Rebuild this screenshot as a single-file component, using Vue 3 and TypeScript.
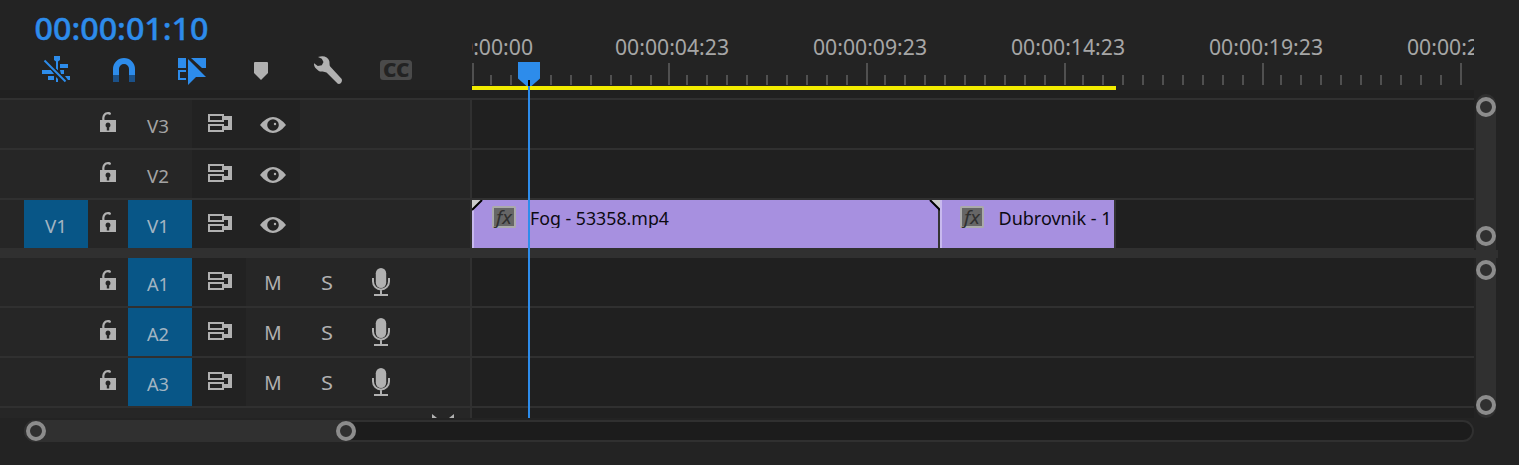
<script setup lang="ts">
interface Track {
  name: string
  source?: string
  target: boolean
}

interface Clip {
  name: string
  width: number
  bodyWidth: number
  textWidth: number
  textX: number
  fade: 'start-end' | 'none'
}

const videoTracks: Track[] = [
  { name: 'V3', target: false },
  { name: 'V2', target: false },
  { name: 'V1', source: 'V1', target: true },
]
const audioTracks: Track[] = [
  { name: 'A1', target: true },
  { name: 'A2', target: true },
  { name: 'A3', target: true },
]
const clips: Clip[] = [
  { name: 'Fog - 53358.mp4', width: 468, bodyWidth: 466, textWidth: 139, textX: 58, fade: 'start-end' },
  { name: 'Dubrovnik - 1', width: 176, bodyWidth: 174, textWidth: 113, textX: 58.5, fade: 'none' },
]

const majors = [0, 196, 394, 592, 790, 988]
const minors = majors
  .slice(0, 5)
  .flatMap((m) => Array.from({ length: 9 }, (_, i) => m + 18 + i * 20))
const labels = ['00:00:00:00', '00:00:04:23', '00:00:09:23', '00:00:14:23', '00:00:19:23', '00:00:24:23'].map(
  (text, i) => ({ text, x: i === 0 ? -53 : -55 + i * 198 }),
)
</script>

<template>
  <div class="panel">
    <header class="top">
      <div class="controls">
        <svg class="timecode" width="200" height="54">
          <text x="-.5" y="39.5" textLength="174" lengthAdjust="spacingAndGlyphs">00:00:01:10</text>
        </svg>
        <div class="tools">
          <svg class="blue" width="28" height="30" viewBox="0 0 28 30">
            <path d="M12 0h6v4l-2 1.500v9l-2-2V5.500L12 4zM18 8h8v4h-8zM0 14h9l3 4H0zM18 14h4v4h-3zM6 20h6v4H6zM14 21l2 2v3h-2zM23 20h5v4h-2z" />
            <path class="slash-gap" d="M2.500 4.500 23.500 25.500" />
            <path class="slash" d="M2.500 4.500 23.500 25.500" />
          </svg>
          <svg class="blue" width="28" height="30" viewBox="0 0 28 30">
            <path d="M3 19v-6a11 11 0 0 1 22 0v6h-6v-6a5 5 0 0 0-10 0v6z" />
            <path class="tips" d="M3 19h6v7H3zM19 19h6v7h-6z" />
          </svg>
          <svg class="blue" width="28" height="30" viewBox="0 0 28 30">
            <path d="M0 2h8v10H0zM13 2h15v10h-4zM10 3l18 18H18l-8 8zM0 14h8v2H2v6h6v2H0z" />
          </svg>
          <svg class="gray" width="28" height="30" viewBox="0 0 28 30">
            <path d="M9 6h12q1 0 1 1v10l-7 7-7-7V7q0-1 1-1z" />
          </svg>
          <svg class="gray" width="28" height="30" viewBox="0 0 28 30">
            <path d="M4 1C9-.8 14 .5 15.300 5c.5 2-.1 4.200.9 5.600l11.300 12.200c1.500 2.500-.9 5.800-3.700 5L12.500 16.600C10.500 14.800 7 16.600 4.200 14.400 1.300 12.700-.3 10 0 7.300L3.800 10l4-.7L9.500 6l-1.700-3.300z" />
          </svg>
          <svg class="cc" width="32" height="30" viewBox="0 0 32 30">
            <rect y="4" width="32" height="20" rx="3.500" />
            <text x="3" y="21" textLength="26.500" lengthAdjust="spacingAndGlyphs">CC</text>
          </svg>
        </div>
      </div>
      <svg class="ruler" width="1002" height="90">
        <text v-for="l in labels" :key="l.text" :x="l.x" y="55" textLength="114" lengthAdjust="spacingAndGlyphs">{{ l.text }}</text>
        <rect v-for="m in majors" :key="'a' + m" :x="m" y="63" width="2" height="22" />
        <rect v-for="m in minors" :key="'b' + m" :x="m" y="75" width="2" height="10" />
        <rect class="work" y="86" width="644" height="4" />
      </svg>
    </header>

    <div class="body">
      <div class="tracks">
        <div v-for="t in videoTracks" :key="t.name" class="row">
          <div class="head">
            <div class="patch" :class="{ on: t.source }">
              <svg v-if="t.source" width="64" height="48"><text x="21" y="33" textLength="22" lengthAdjust="spacingAndGlyphs">{{ t.source }}</text></svg>
            </div>
            <div class="lock">
              <svg width="40" height="48">
                <path d="M12 20h2.300c-.5-5 2-8 5.700-8 2 0 3 .5 3 2l-1 1c-3.500-2-6 .5-5.500 5H28v12H12zM20 22.500a2.700 2.700 0 0 0-1.200 5V30.500h2.400v-3a2.700 2.700 0 0 0-1.200-5z" />
              </svg>
            </div>
            <div class="name" :class="{ on: t.target }">
              <svg width="64" height="48"><text x="19" y="33" textLength="22" lengthAdjust="spacingAndGlyphs">{{ t.name }}</text></svg>
            </div>
            <div class="toggles">
              <svg width="54" height="48">
                <path d="M16 14h16v2h8v14h-8v2H16v-8h16v2h4v-6h-4v2H16zM18 16v4h12v-4zM18 26v4h12v-4z" />
              </svg>
              <svg width="54" height="48">
                <path d="M14 25Q27 9 40 25 27 41 14 25zM27 19.200a5.800 5.800 0 1 0 0 11.600 5.800 5.800 0 1 0 0-11.600z" />
                <circle cx="29" cy="24" r="1.200" />
              </svg>
            </div>
          </div>
          <div class="lane">
            <template v-if="t.name === 'V1'">
              <svg v-for="c in clips" :key="c.name" class="clip" :width="c.width" height="48">
                <rect class="edge" :width="c.width" height="48" />
                <rect class="fill" :width="c.bodyWidth" height="48" />
                <rect class="shine" width="2" height="48" />
                <template v-if="c.fade === 'start-end'">
                  <path class="corner" d="M0 0h10L0 10zM458 0h10v10z" />
                  <path class="fade" d="M0 10 10 0M458 0l10 10" />
                </template>
                <rect class="badge" x="21" y="7" width="22" height="20" rx=".5" />
                <text class="fx" x="24" y="24" textLength="16" lengthAdjust="spacingAndGlyphs">fx</text>
                <svg height="28" :width="c.bodyWidth">
                  <text class="title" :x="c.textX" y="25" :textLength="c.textWidth" lengthAdjust="spacingAndGlyphs">{{ c.name }}</text>
                </svg>
              </svg>
            </template>
          </div>
        </div>
        <div class="divider"></div>
        <div v-for="t in audioTracks" :key="t.name" class="row audio">
          <div class="head">
            <div class="patch"></div>
            <div class="lock">
              <svg width="40" height="48">
                <path d="M12 20h2.300c-.5-5 2-8 5.700-8 2 0 3 .5 3 2l-1 1c-3.500-2-6 .5-5.500 5H28v12H12zM20 22.500a2.700 2.700 0 0 0-1.200 5V30.500h2.400v-3a2.700 2.700 0 0 0-1.200-5z" />
              </svg>
            </div>
            <div class="name on">
              <svg width="64" height="48"><text x="19" y="33" textLength="22" lengthAdjust="spacingAndGlyphs">{{ t.name }}</text></svg>
            </div>
            <div class="toggles">
              <svg width="54" height="48">
                <path d="M16 14h16v2h8v14h-8v2H16v-8h16v2h4v-6h-4v2H16zM18 16v4h12v-4zM18 26v4h12v-4z" />
              </svg>
            </div>
            <svg class="ms" width="108" height="48">
              <text x="18.300" y="32" textLength="17.400" lengthAdjust="spacingAndGlyphs">M</text>
              <text x="75" y="32" textLength="12" lengthAdjust="spacingAndGlyphs">S</text>
            </svg>
            <svg width="54" height="48">
              <rect x="21.800" y="10" width="10.400" height="20" rx="5.200" />
              <path class="stroke" d="M19 20v3.500a8 8 0 0 0 16 0V20M27 31.500V37M20 37h14" />
            </svg>
          </div>
          <div class="lane"></div>
        </div>
        <div class="row tail">
          <div class="head">
            <svg width="22" height="4"><path d="M0 0l5 4H0zM22 0l-5 4h5z" /></svg>
          </div>
          <div class="lane"></div>
        </div>
      </div>
      <div class="vbars">
        <div class="vbar video"><i class="knob"></i><i class="knob"></i></div>
        <div class="vgap"></div>
        <div class="vbar sound"><i class="knob"></i><i class="knob"></i></div>
      </div>
    </div>

    <div class="hbar">
      <div class="thumb"><i class="knob"></i><i class="knob"></i></div>
    </div>

    <svg class="playhead" width="22" height="356">
      <path d="M0 0h22v16.500L13.500 24h-5L0 16.500z" />
      <rect class="notch" x="10" y="18" width="2" height="6" />
      <rect x="10" y="24" width="2" height="332" />
    </svg>
  </div>
</template>

<style>
body {
  background: #232323;
  overflow: hidden;
}
</style>

<style scoped>
.panel {
  position: relative;
  width: 1519px;
  height: 465px;
  overflow: hidden;
  background: #232323;
  font-family: 'Noto Sans', 'Open Sans', sans-serif;
}
svg {
  display: block;
  flex: none;
}
.top {
  display: flex;
  height: 90px;
}
.controls {
  width: 472px;
}
.timecode {
  margin-left: 35px;
  fill: #2d8ceb;
  stroke: #2d8ceb;
  stroke-width: 0.4px;
  font-size: 30px;
  font-weight: 500;
}
.tools {
  display: flex;
  gap: 40px;
  padding: 2px 0 0 42px;
}
.blue {
  fill: #2d8ceb;
}
.slash {
  stroke: #2d8ceb;
  stroke-width: 2;
}
.slash-gap {
  stroke: #232323;
  stroke-width: 4.5;
}
.tips {
  fill: #1b5189;
}
.gray {
  fill: #b1b1b1;
}
.cc {
  margin-left: -2px;
  fill: #4a4a4a;
}
.cc text {
  fill: #232323;
  font-size: 19px;
  font-weight: 900;
}
.ruler {
  fill: #505050;
}
.ruler text {
  fill: #a6a6a6;
  font-size: 21.500px;
}
.ruler .work {
  fill: #f2ec00;
}
.body {
  display: flex;
  height: 328px;
}
.tracks {
  width: 1474px;
  padding-top: 8px;
  background: #202020;
}
.row {
  display: flex;
  box-sizing: border-box;
  height: 50px;
  border-top: 2px solid #303030;
}
.head {
  display: flex;
  box-sizing: border-box;
  width: 472px;
  padding-left: 24px;
  border-right: 2px solid #303030;
  background: #262626;
  fill: #b1b1b1;
}
.lane {
  display: flex;
  flex: 1;
  background: #202020;
}
.patch,
.name {
  width: 64px;
}
.on {
  background: #085687;
}
.patch text,
.name text {
  fill: #a3a3a3;
  font-size: 18px;
}
.name.on text,
.patch.on text {
  fill: #a2b4c2;
}
.toggles {
  display: flex;
  background: #222;
}
.ms text {
  font-size: 19.500px;
}
.stroke {
  fill: none;
  stroke: #b1b1b1;
  stroke-width: 2;
}
.divider {
  height: 10px;
  background: #303030;
}
.divider + .row {
  height: 48px;
  border-top: 0;
}
.tail {
  height: 12px;
}
.tail .head {
  padding: 6px 0 0 432px;
}
.edge {
  fill: #343434;
}
.fill {
  fill: #a790e0;
}
.shine {
  fill: #c8b9ee;
}
.corner {
  fill: #ccc;
}
.fade {
  stroke: #000;
  stroke-width: 2;
}
.badge {
  fill: #666;
  stroke: #aaa;
  stroke-width: 2;
}
.fx {
  fill: #303030;
  font-size: 18px;
  font-style: italic;
}
.title {
  fill: #0c0a12;
  font-size: 18.500px;
}
.vbars {
  width: 24px;
}
.vbar {
  display: flex;
  flex-direction: column;
  justify-content: space-between;
  box-sizing: border-box;
  width: 20px;
  margin-left: 2px;
  background: #303030;
}
.video {
  height: 156px;
  margin-top: 4px;
  padding: 3px 0 4px;
  border-radius: 10px 10px 0 0;
}
.vgap {
  height: 8px;
  background: #303030;
}
.sound {
  height: 160px;
  padding: 2px 0 3px;
  border-radius: 0 0 10px 10px;
}
.knob {
  box-sizing: border-box;
  flex: none;
  width: 20px;
  height: 20px;
  border: 4px solid #8c8c8c;
  border-radius: 50%;
  background: #303030;
}
.hbar {
  box-sizing: border-box;
  width: 1450px;
  height: 22px;
  margin: 2px 0 0 24px;
  border: 2px solid #303030;
  border-radius: 11px;
  background: #1c1c1c;
}
.thumb {
  display: flex;
  justify-content: space-between;
  box-sizing: border-box;
  width: 332px;
  height: 22px;
  margin: -2px 0 0 -2px;
  padding: 1px 0 0 2px;
  border-radius: 11px;
  background: #303030;
}
.playhead {
  position: absolute;
  left: 518px;
  top: 62px;
  fill: #2d8ceb;
}
.notch {
  fill: #000;
}
</style>
